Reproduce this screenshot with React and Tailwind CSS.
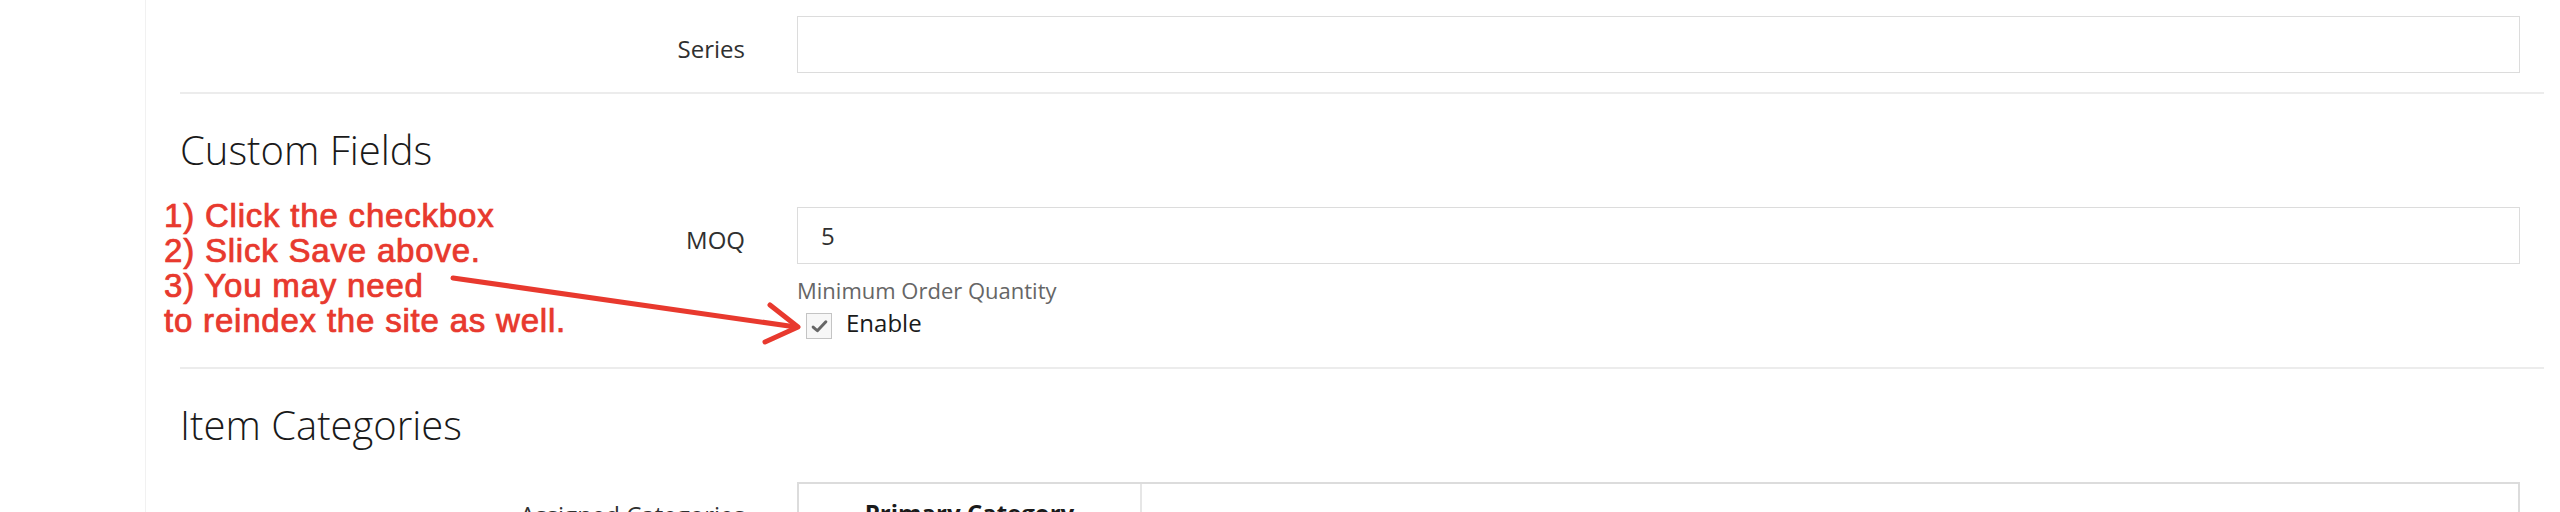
import React from 'react';

const FONT = { fontFamily: '"Open Sans", "Noto Sans", sans-serif' };

function FieldRow({ label, children, labelTop = 'mt-[17px]' }) {
    return (
        <div className="flex items-start">
            <div className={`w-[617px] shrink-0 pr-[52px] text-right text-[24px] leading-[32px] text-[#303030] ${labelTop}`}>
                {label}
            </div>
            <div className="flex-1 mr-[24px]">{children}</div>
        </div>
    );
}

function TextInput({ value }) {
    return (
        <div className="h-[57px] border border-[#dcdcdc] bg-white pl-[23px] text-[24px] leading-[55px] text-[#303030]">
            {value}
        </div>
    );
}

export default function App() {
    return (
        <div style={FONT} className="relative flex w-[2560px] h-[512px] overflow-hidden bg-white">
            {/* left rail */}
            <div className="w-[146px] shrink-0 border-r border-[#f1f1f1]" />

            <div className="flex-1 pl-[34px] pr-[16px]">
                {/* Series */}
                <div className="h-[92px]">
                    <FieldRow label="Series" labelTop="mt-[33px]">
                        <div className="mt-[16px]">
                            <TextInput value="" />
                        </div>
                    </FieldRow>
                </div>
                <div className="h-[2px] bg-[#ececec]" />

                {/* Custom Fields */}
                <h2 className="mt-[32px] text-[40px] leading-[48px] font-light text-[#1a1a1a]">Custom Fields</h2>
                <div className="mt-[33px]">
                    <FieldRow label="MOQ">
                        <TextInput value="5" />
                        <div className="mt-[12px] text-[22px] leading-[28px] text-[#666666]">Minimum Order Quantity</div>
                        <label className="mt-[7px] flex items-start gap-[14px] pl-[9px]">
                            <span className="mt-[2px] flex h-[26px] w-[26px] items-center justify-center border border-[#c4c4c4] bg-[#f7f7f7]">
                                <svg width="17" height="15" viewBox="0 0 16 14" fill="none">
                                    <path d="M2 7.5 L6 11 L14 2.5" stroke="#666666" strokeWidth="2.8" strokeLinecap="round" strokeLinejoin="round" />
                                </svg>
                            </span>
                            <span className="text-[24px] leading-[24px] text-[#1a1a1a]">Enable</span>
                        </label>
                    </FieldRow>
                </div>
                <div className="mt-[28px] h-[2px] bg-[#ececec]" />

                {/* Item Categories */}
                <h2 className="mt-[32px] text-[40px] leading-[48px] font-light text-[#1a1a1a]">Item Categories</h2>
                <div className="mt-[33px]">
                    <FieldRow label="Assigned Categories">
                        <div className="border-2 border-[#dcdcdc] flex h-[120px]">
                            <div className="w-[343px] border-r-2 border-[#e6e6e6] pt-[13px] text-center text-[24px] leading-[32px] font-bold text-[#1a1a1a]">
                                Primary Category
                            </div>
                            <div className="flex-1" />
                        </div>
                    </FieldRow>
                </div>
            </div>

            {/* red annotation */}
            <div
                style={{ fontFamily: '"Liberation Sans", Arial, sans-serif' }}
                className="absolute left-[164px] top-[198px] text-[33px] leading-[35px] tracking-[0.8px] text-[#e8392e] [-webkit-text-stroke:0.6px_#e8392e] [text-shadow:0_0_1px_rgba(232,57,46,0.7)] whitespace-nowrap"
            >
                <div>1) Click the checkbox</div>
                <div>2) Slick Save above.</div>
                <div>3) You may need</div>
                <div>to reindex the site as well.</div>
            </div>
            <svg className="absolute left-0 top-0 pointer-events-none" width="2560" height="512">
                <g stroke="#e8392e" strokeWidth="5" strokeLinecap="round" strokeLinejoin="round" fill="none">
                    <path d="M453 278 L796 327" />
                    <path d="M770 305 L798 327 L765 342" />
                </g>
            </svg>
        </div>
    );
}
